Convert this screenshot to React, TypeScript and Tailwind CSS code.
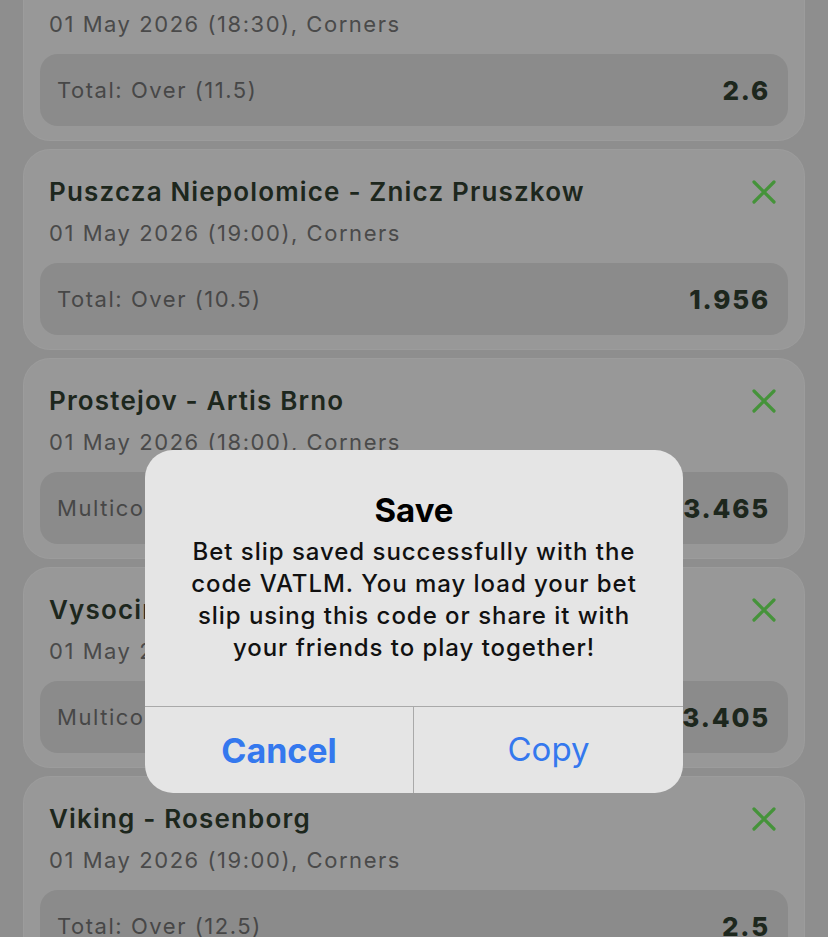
import React from 'react';

type Bet = {
  id: number;
  match: string;
  date: string;
  market: string;
  odds: string;
};

const bets: Bet[] = [
  { id: 1, match: 'Hidden Match', date: '01 May 2026 (18:30), Corners', market: 'Total: Over (11.5)', odds: '2.6' },
  { id: 2, match: 'Puszcza Niepolomice - Znicz Pruszkow', date: '01 May 2026 (19:00), Corners', market: 'Total: Over (10.5)', odds: '1.956' },
  { id: 3, match: 'Prostejov - Artis Brno', date: '01 May 2026 (18:00), Corners', market: 'Multicorner', odds: '3.465' },
  { id: 4, match: 'Vysocina Jihlava - Zbrojovka Brno', date: '01 May 2026 (20:00), Corners', market: 'Multicorner', odds: '3.405' },
  { id: 5, match: 'Viking - Rosenborg', date: '01 May 2026 (19:00), Corners', market: 'Total: Over (12.5)', odds: '2.5' },
];

const RemoveIcon = () => (
  <svg width="24" height="24" viewBox="0 0 24 24" fill="none" stroke="#45933a" strokeWidth="3.2" strokeLinecap="round">
    <path d="M2 2 L22 22 M22 2 L2 22" />
  </svg>
);

const BetCard = ({ bet }: { bet: Bet }) => (
  <div className="rounded-[26px] bg-[#989898] px-[16px] pt-[26px] pb-[14px] shadow-[0_0_0_1px_#9c9c9c]">
    <div className="flex items-center justify-between pl-[9px] pr-[12px]">
      <h4 className="text-[26px] leading-[32px] font-semibold tracking-[0.045em] text-[#1d271d] whitespace-nowrap">{bet.match}</h4>
      <RemoveIcon />
    </div>
    <p className="mt-[11px] pl-[9px] text-[22px] leading-[28px] tracking-[0.07em] text-[#4a4a4a]">{bet.date}</p>
    <div className="mt-[16px] flex h-[72px] items-center justify-between rounded-[18px] bg-[#8b8b8b] pl-[17px] pr-[18px]">
      <span className="text-[22px] tracking-[0.07em] text-[#474747]">{bet.market}</span>
      <span className="text-[26px] font-extrabold tracking-[0.07em] text-[#1d271d]">{bet.odds}</span>
    </div>
  </div>
);

export default function App() {
  return (
    <div
      className="relative h-[937px] w-[828px] overflow-hidden bg-[#8e8e8e]"
      style={{ fontFamily: 'Inter, "Noto Sans", sans-serif' }}
    >
      <div className="-mt-[59px] flex flex-col gap-[10px] px-[24px]">
        {bets.map(bet => (
          <BetCard key={bet.id} bet={bet} />
        ))}
      </div>

      <div className="absolute left-[145px] top-[450px] w-[538px] overflow-hidden rounded-[28px] bg-[#e5e5e5]">
        <div className="px-[10px] pt-[41px] pb-[42px] text-center">
          <h3 className="text-[33px] leading-[38px] font-bold text-black">Save</h3>
          <p className="mt-[7px] text-[24px] leading-[32px] font-medium tracking-[0.04em] text-[#111]">
            Bet slip saved successfully with the
            <br />
            code VATLM. You may load your bet
            <br />
            slip using this code or share it with
            <br />
            your friends to play together!
          </p>
        </div>
        <div className="grid h-[87px] grid-cols-2 border-t border-[#a9a9a9]">
          <button className="border-r border-[#a9a9a9] text-[34px] font-bold text-[#3478ee]">Cancel</button>
          <button className="text-[33px] text-[#3478ee]">Copy</button>
        </div>
      </div>
    </div>
  );
}
